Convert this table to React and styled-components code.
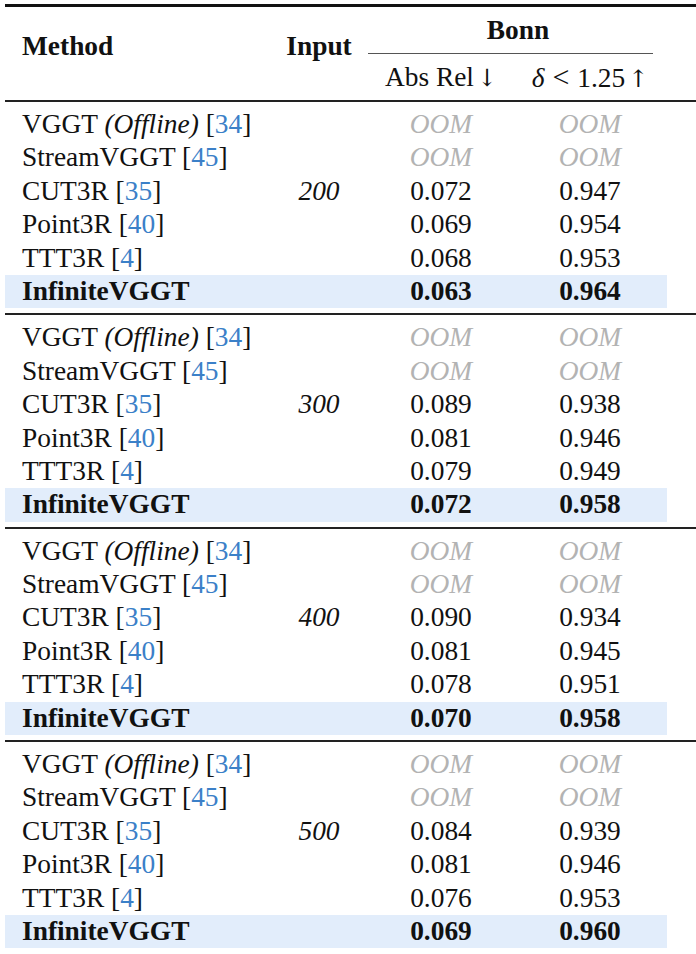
import React from "react";
import styled, { createGlobalStyle } from "styled-components";

const GlobalStyle = createGlobalStyle`
    body {
        margin     : 0;
        background : #ffffff;
        overflow   : hidden;
    }
`

const groups = [
    { input: "200", values: [["0.072", "0.947"], ["0.069", "0.954"], ["0.068", "0.953"], ["0.063", "0.964"]] },
    { input: "300", values: [["0.089", "0.938"], ["0.081", "0.946"], ["0.079", "0.949"], ["0.072", "0.958"]] },
    { input: "400", values: [["0.090", "0.934"], ["0.081", "0.945"], ["0.078", "0.951"], ["0.070", "0.958"]] },
    { input: "500", values: [["0.084", "0.939"], ["0.081", "0.946"], ["0.076", "0.953"], ["0.069", "0.960"]] },
]

const methods = [
    { name: "VGGT", offline: true, cite: "34", oom: true },
    { name: "StreamVGGT", cite: "45", oom: true },
    { name: "CUT3R", cite: "35" },
    { name: "Point3R", cite: "40" },
    { name: "TTT3R", cite: "4" },
]

const App = () => {
    return (
        <Page>
            <GlobalStyle />
            <TopRule />
            <Header>
                <HeadCell>Method</HeadCell>
                <HeadCell $center>Input</HeadCell>
                <BonnGroup>
                    <BonnTitle>Bonn</BonnTitle>
                    <CMidRule />
                    <SubHeads>
                        <SubHead>Abs Rel<Arrow>↓</Arrow></SubHead>
                        <SubHead><MathI>δ</MathI><Rel>&lt;</Rel>1.25<Arrow>↑</Arrow></SubHead>
                    </SubHeads>
                </BonnGroup>
            </Header>
            {groups.map((g) => (
                <React.Fragment key={g.input}>
                    <MidRule />
                    <Group>
                        {methods.map((m, i) => {
                            const vals = m.oom ? null : g.values[i - 2]
                            return (
                                <Row key={m.name}>
                                    <NameCell>
                                        {m.name}
                                        {m.offline && <> <em>(Offline)</em></>}
                                        {" "}[<Cite>{m.cite}</Cite>]
                                    </NameCell>
                                    <InputCell>{i === 2 ? g.input : ""}</InputCell>
                                    {vals ? (
                                        <>
                                            <ValueCell>{vals[0]}</ValueCell>
                                            <ValueCell>{vals[1]}</ValueCell>
                                        </>
                                    ) : (
                                        <>
                                            <ValueCell $oom>OOM</ValueCell>
                                            <ValueCell $oom>OOM</ValueCell>
                                        </>
                                    )}
                                </Row>
                            )
                        })}
                        <Row $hl>
                            <NameCell $bold>InfiniteVGGT</NameCell>
                            <InputCell />
                            <ValueCell $bold>{g.values[3][0]}</ValueCell>
                            <ValueCell $bold>{g.values[3][1]}</ValueCell>
                        </Row>
                    </Group>
                </React.Fragment>
            ))}
        </Page>
    )
}

export default App;

const Page = styled.div`
    padding-left : 5px;
    padding-top  : 4px;
    font-family  : "Liberation Serif", "Times New Roman", serif;
    font-size    : 27.4px;
    color        : #111111;
`

const TopRule = styled.div`
    height     : 3px;
    background : #111111;
`

const MidRule = styled.div`
    height     : 2px;
    background : #222222;
`

const Header = styled.div`
    display               : grid;
    grid-template-columns : 280px 68px 298px;
    height                : 93px;
`

const HeadCell = styled.div`
    padding-top  : 23px;
    padding-left : ${p => p.$center ? "0" : "17px"};
    text-align   : ${p => p.$center ? "center" : "left"};
    font-weight  : 700;
    line-height  : 33px;
    white-space  : nowrap;
`

const BonnGroup = styled.div`
    display        : flex;
    flex-direction : column;
`

const BonnTitle = styled.div`
    height       : 46px;
    line-height  : 46px;
    padding-left : 32px;
    text-align   : center;
    font-weight  : 700;
`

const CMidRule = styled.div`
    height       : 1px;
    margin-left  : 15px;
    margin-right : -2px;
    background   : #555555;
`

const SubHeads = styled.div`
    display               : grid;
    grid-template-columns : 176px 122px;
    height                : 46px;
    line-height           : 46px;
`

const SubHead = styled.div`
    text-align  : center;
    white-space : nowrap;
`

const Arrow = styled.span`
    margin-left : 3px;
    font-family : "DejaVu Serif", serif;
    font-size   : 24px;
`

const MathI = styled.span`
    font-style : italic;
`

const Rel = styled.span`
    margin    : 0 8px;
    font-size : 30px;
`

const Group = styled.div`
    padding : 6px 0 5px;
`

const Row = styled.div`
    display               : grid;
    grid-template-columns : 280px 68px 176px 122px;
    width                 : max-content;
    padding-right         : 16px;
    height                : 33.4px;
    line-height           : 33.4px;
    background            : ${p => p.$hl ? "#e2edfb" : "transparent"};
`

const NameCell = styled.div`
    padding-left : 17px;
    white-space  : nowrap;
    font-weight  : ${p => p.$bold ? 700 : 400};
`

const InputCell = styled.div`
    text-align : center;
    font-style : italic;
`

const ValueCell = styled.div`
    text-align  : center;
    font-weight : ${p => p.$bold ? 700 : 400};
    font-style  : ${p => p.$oom ? "italic" : "normal"};
    color       : ${p => p.$oom ? "#b3b3b3" : "inherit"};
`

const Cite = styled.span`
    color : #3b80c8;
`
